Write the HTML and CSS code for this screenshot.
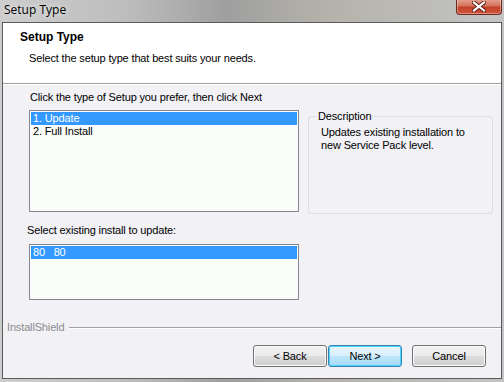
FILE: index.html
```html
<!DOCTYPE html>
<html>
<head>
<meta charset="utf-8">
<link rel="stylesheet" href="styles.css">
</head>
<body>
<div class="window">
  <div class="titlebar">
    <span class="title">Setup Type</span>
    <div class="close"><svg width="14" height="11" viewBox="0 0 14 11"><path d="M2 1.5 L12 9.5 M12 1.5 L2 9.5" stroke="#5a1a14" stroke-width="4" stroke-linecap="square"/><path d="M2 1.5 L12 9.5 M12 1.5 L2 9.5" stroke="#fff" stroke-width="2.2" stroke-linecap="square"/></svg></div>
  </div>
  <div class="client">
    <div class="header">
      <div class="h-title">Setup Type</div>
      <div class="h-sub">Select the setup type that best suits your needs.</div>
    </div>
    <div class="sep"></div>
    <div class="main">
      <div class="left">
        <div class="lbl lbl1">Click the type of Setup you prefer, then click Next</div>
        <div class="listbox lb1">
          <div class="item sel">1. Update</div>
          <div class="item">2. Full Install</div>
        </div>
        <div class="lbl lbl2">Select existing install to update:</div>
        <div class="listbox lb2">
          <div class="item sel">80&nbsp;&nbsp;&nbsp;80</div>
        </div>
      </div>
      <div class="group">
        <span class="legend">Description</span>
        <div class="desc">Updates existing installation to<br>new Service Pack level.</div>
      </div>
    </div>
    <div class="brand">
      <span class="brand-text">InstallShield</span>
      <span class="brand-line"></span>
    </div>
    <div class="buttons">
      <div class="btn">&lt; Back</div>
      <div class="btn default">Next &gt;</div>
      <div class="btn cancel">Cancel</div>
    </div>
  </div>
</div>
</body>
</html>
```

FILE: styles.css
```css
* { box-sizing: border-box; }
html, body { margin: 0; padding: 0; }
body {
  width: 504px;
  height: 382px;
  overflow: hidden;
  font-family: "Liberation Sans", Arial, sans-serif;
  font-size: 11px;
  letter-spacing: -0.15px;
  color: #000;
}
.window {
  width: 504px;
  height: 382px;
  display: flex;
  flex-direction: column;
  background: linear-gradient(90deg, #cdcdcd 0%, #bdbdbd 25%, #9f9f9f 45%, #b4b2aa 65%, #c4c4c4 100%);
  padding: 0 2px 3px 2px;
}
.titlebar {
  height: 22px;
  flex: none;
  display: flex;
  align-items: flex-start;
  justify-content: space-between;
}
.title {
  font-family: "Open Sans", "Noto Sans", sans-serif;
  font-size: 12px;
  letter-spacing: 0;
  color: #000;
  margin: 2px 0 0 2px;
  line-height: 16px;
  text-shadow: 0 0 6px rgba(255,255,255,0.9);
}
.close {
  width: 46px;
  height: 16px;
  margin-top: -1px;
  border: 1px solid #6a2a22;
  border-top: none;
  border-radius: 0 0 4px 4px;
  background: linear-gradient(180deg, #e8a592 0%, #d3735c 45%, #c4412a 55%, #d0553a 100%);
  display: flex;
  align-items: center;
  justify-content: center;
  box-shadow: inset 0 0 0 1px rgba(255,255,255,0.35);
}
.client {
  flex: 1;
  background: #f2f1f5;
  border: 1px solid #5b5b5b;
  display: flex;
  flex-direction: column;
}
.header {
  height: 60px;
  background: #fff;
  padding: 7px 0 0 17px;
}
.h-title {
  font-weight: bold;
  font-size: 12px;
  letter-spacing: 0;
  line-height: 14px;
}
.h-sub {
  margin: 8px 0 0 9px;
  line-height: 13px;
}
.sep {
  height: 2px;
  border-top: 1px solid #a0a0a0;
  border-bottom: 1px solid #ffffff;
}
.main {
  display: flex;
  align-items: flex-start;
  padding: 6px 0 0 26px;
  height: 236px;
}
.left {
  width: 270px;
  display: flex;
  flex-direction: column;
}
.lbl { line-height: 13px; }
.lbl1 { margin-left: 1px; }
.lbl2 { margin: 12px 0 0 -2px; }
.listbox {
  background: #fafdfa;
  border: 1px solid #828790;
  padding: 1px;
}
.lb1 { height: 102px; margin-top: 6px; }
.lb2 { height: 56px; margin-top: 7px; }
.item {
  height: 13px;
  line-height: 13px;
  padding-left: 2px;
}
.item.sel { background: #3399ff; color: #fff; }
.group {
  margin: 25px 0 0 9px;
  width: 185px;
  height: 98px;
  border: 1px solid #d5dfe5;
  border-radius: 3px;
  position: relative;
  padding: 9px 0 0 12px;
}
.legend {
  position: absolute;
  top: -7px;
  left: 7px;
  background: #f2f1f5;
  padding: 0 1px 0 2px;
  line-height: 13px;
}
.desc { line-height: 13px; }
.brand {
  display: flex;
  align-items: center;
  padding: 0 0 0 4px;
  height: 13px;
}
.brand-text { color: #8c8c8c; line-height: 13px; }
.brand-line {
  flex: 1;
  height: 2px;
  margin-left: 5px;
  border-top: 1px solid #a0a0a0;
  border-bottom: 1px solid #fff;
}
.buttons {
  display: flex;
  padding: 11px 0 0 250px;
}
.btn {
  width: 74px;
  height: 22px;
  border: 1px solid #707070;
  border-radius: 3px;
  background: linear-gradient(180deg, #f2f2f2 0%, #ebebeb 48%, #dddddd 52%, #cfcfcf 100%);
  box-shadow: inset 0 0 0 1px #fcfcfc;
  display: flex;
  align-items: center;
  justify-content: center;
  line-height: 13px;
}
.btn.default {
  margin-left: 1px;
  border-color: #3c7fb1;
  background: linear-gradient(180deg, #eaf6fd 0%, #d9f0fc 48%, #bee6fd 52%, #a7d9f5 100%);
  box-shadow: inset 0 0 0 1px #48d8fb;
}
.btn.cancel { margin-left: 10px; }
```
